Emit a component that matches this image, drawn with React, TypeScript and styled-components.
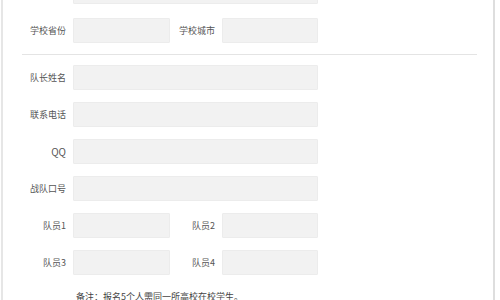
import styled, { createGlobalStyle } from "styled-components";

const GlobalStyle = createGlobalStyle`
  html, body {
    margin: 0;
    padding: 0;
    background: #ffffff;
    overflow: hidden;
  }
  body {
    font-family: "Noto Sans CJK SC", "Noto Sans", sans-serif;
  }
`;

const Panel = styled.div`
  margin-left: 1px;
  width: 490px;
  height: 300px;
  border-left: 2px solid #e6e6e6;
  border-right: 2px solid #dedede;
  background: #fff;
  overflow: hidden;
`;

const Form = styled.form`
  margin-top: -21px;
  padding-left: 7px;
`;

const Section = styled.div<{ $gap: number }>`
  display: flex;
  flex-direction: column;
  gap: ${(p) => p.$gap}px;
`;

const Row = styled.div`
  display: flex;
  align-items: center;
  height: 25px;
`;

const Label = styled.label<{ $w: number; $latin?: boolean }>`
  width: ${(p) => p.$w}px;
  flex: none;
  text-align: right;
  margin-right: 7px;
  font-size: ${(p) => (p.$latin ? 10 : 9)}px;
  color: #555;
  line-height: 25px;
  white-space: nowrap;
`;

const Input = styled.input<{ $w: number }>`
  width: ${(p) => p.$w}px;
  height: 25px;
  box-sizing: border-box;
  flex: none;
  background: #f2f2f2;
  border: 1px solid #ececec;
  border-radius: 1px;
  padding: 0 6px;
  outline: none;
`;

const Divider = styled.hr`
  border: none;
  border-top: 1px solid #e4e4e4;
  margin: 11px 16px 10px 12px;
  height: 0;
`;

const Note = styled.p`
  margin: 15px 0 0 66px;
  font-size: 9px;
  color: #444;
  white-space: nowrap;
`;

function FullRow({ label, latin }: { label: string; latin?: boolean }) {
  return (
    <Row>
      <Label $w={56} $latin={latin}>{label}</Label>
      <Input $w={245} />
    </Row>
  );
}

function HalfRow({ left, right }: { left: string; right: string }) {
  return (
    <Row>
      <Label $w={56}>{left}</Label>
      <Input $w={97} />
      <Label $w={45}>{right}</Label>
      <Input $w={96} />
    </Row>
  );
}

export default function App() {
  return (
    <>
      <GlobalStyle />
      <Panel>
        <Form>
          <Section $gap={14}>
            <FullRow label="学校名称" />
            <HalfRow left="学校省份" right="学校城市" />
          </Section>
          <Divider />
          <Section $gap={12}>
            <FullRow label="队长姓名" />
            <FullRow label="联系电话" />
            <FullRow label="QQ" latin />
            <FullRow label="战队口号" />
            <HalfRow left="队员1" right="队员2" />
            <HalfRow left="队员3" right="队员4" />
          </Section>
          <Note>备注：报名5个人需同一所高校在校学生。</Note>
        </Form>
      </Panel>
    </>
  );
}
